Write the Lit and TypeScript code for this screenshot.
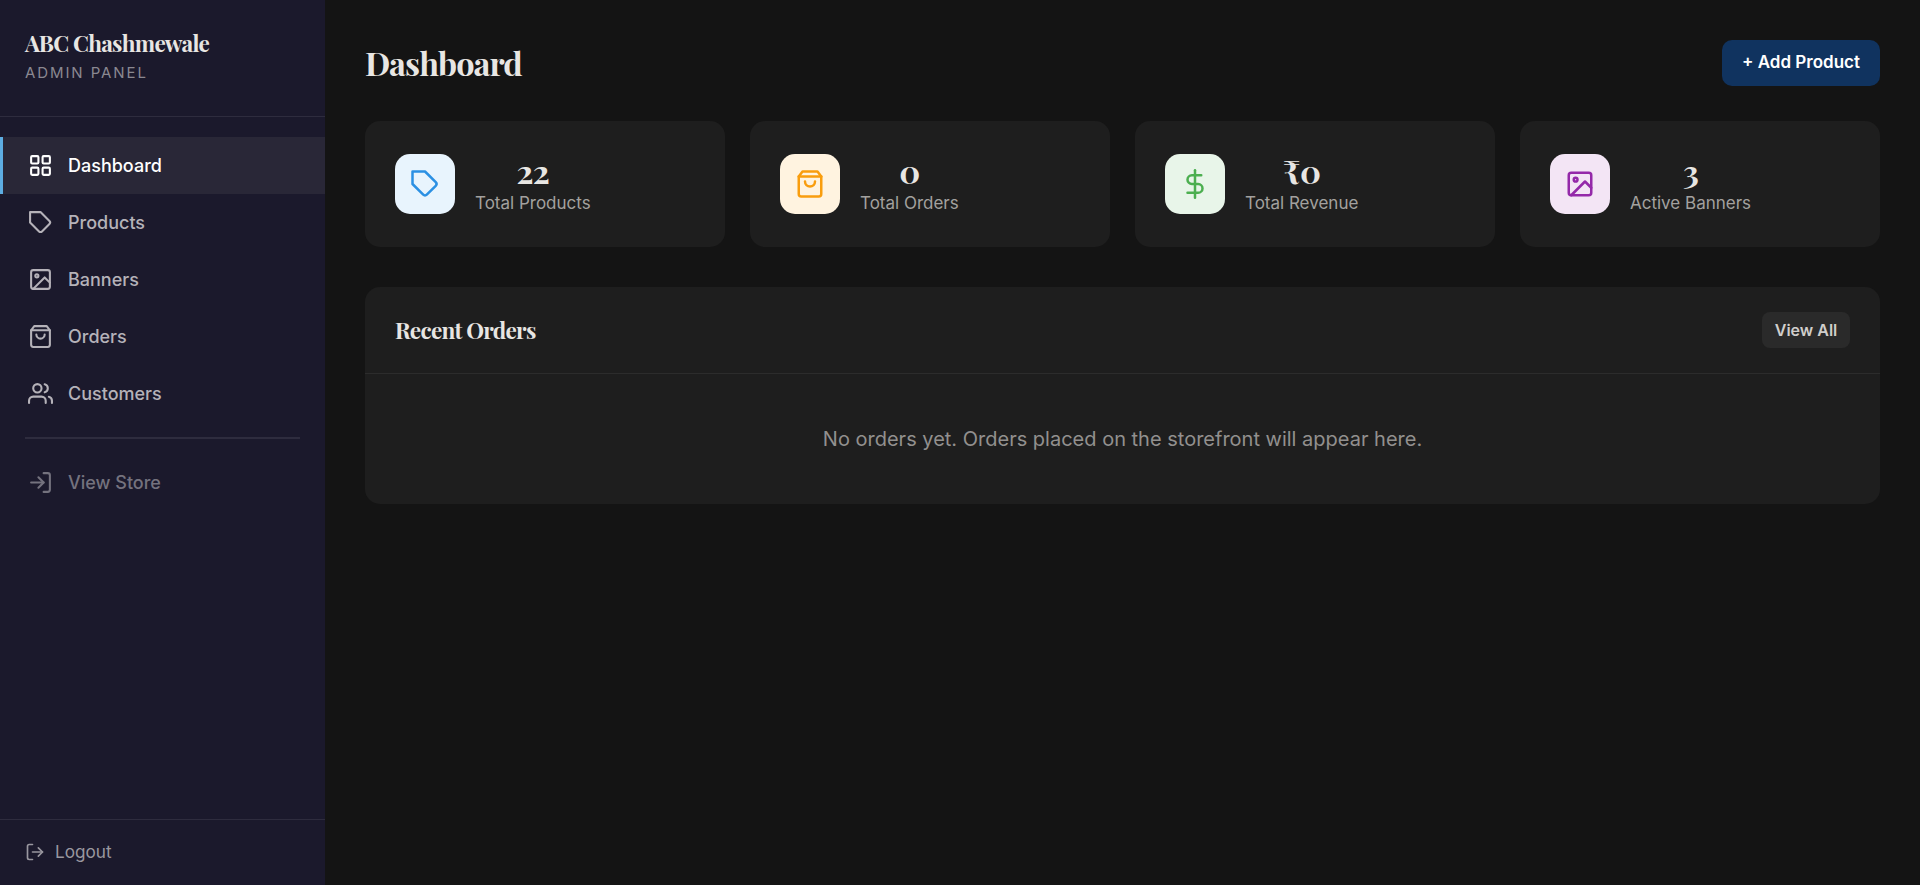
import { LitElement, html, svg, css, TemplateResult } from 'lit';
import { customElement, property } from 'lit/decorators.js';
import { classMap } from 'lit/directives/class-map.js';

const glyphs: Record<string, TemplateResult> = {
  grid: svg`<rect x="3" y="3" width="7" height="7" rx="1"/><rect x="14" y="3" width="7" height="7" rx="1"/><rect x="3" y="14" width="7" height="7" rx="1"/><rect x="14" y="14" width="7" height="7" rx="1"/>`,
  tag: svg`<path d="M20.59 13.41l-7.17 7.17a2 2 0 0 1-2.83 0L2 12V2h10l8.59 8.59a2 2 0 0 1 0 2.82z"/>`,
  image: svg`<rect x="3" y="3" width="18" height="18" rx="2"/><circle cx="8.5" cy="8.5" r="1.5"/><path d="M21 15l-5-5L5 21"/>`,
  bag: svg`<path d="M6 2L3 6v14a2 2 0 0 0 2 2h14a2 2 0 0 0 2-2V6l-3-4z"/><path d="M3 6h18"/><path d="M16 10a4 4 0 0 1-8 0"/>`,
  users: svg`<path d="M17 21v-2a4 4 0 0 0-4-4H5a4 4 0 0 0-4 4v2"/><circle cx="9" cy="7" r="4"/><path d="M23 21v-2a4 4 0 0 0-3-3.87"/><path d="M16 3.13a4 4 0 0 1 0 7.75"/>`,
  login: svg`<path d="M15 3h4a2 2 0 0 1 2 2v14a2 2 0 0 1-2 2h-4"/><path d="M10 17l5-5-5-5"/><path d="M15 12H3"/>`,
  logout: svg`<path d="M9 21H5a2 2 0 0 1-2-2V5a2 2 0 0 1 2-2h4"/><path d="M16 17l5-5-5-5"/><path d="M21 12H9"/>`,
  dollar: svg`<path d="M12 1v22"/><path d="M17 5H9.5a3.5 3.5 0 0 0 0 7h5a3.5 3.5 0 0 1 0 7H6"/>`,
};

@customElement('line-icon')
export class LineIcon extends LitElement {
  @property() name = 'grid';
  static styles = css`
    :host { display: block; flex: none; }
    .glyph {
      display: block; width: 100%; height: 100%; fill: none; stroke: currentColor;
      stroke-width: 2; stroke-linecap: round; stroke-linejoin: round;
    }
  `;
  render() {
    return html`<svg class="glyph" viewBox="0 0 24 24">${glyphs[this.name]}</svg>`;
  }
}

@customElement('admin-sidebar')
export class AdminSidebar extends LitElement {
  static styles = css`
    :host {
      display: flex; flex-direction: column; width: 325px; flex: none;
      box-sizing: border-box; background: #1b192c; color: #b5b2b9;
    }
    .brand {
      height: 117px; box-sizing: border-box; padding: 28px 25px 0;
      border-bottom: 1px solid #2e2c3e;
    }
    .name {
      font: 700 22.5px/30px "Playfair Display", "Liberation Serif", serif;
      letter-spacing: -0.7px; color: #e8e6e3; white-space: nowrap;
    }
    .sub { font-size: 15px; line-height: 24px; letter-spacing: 1.9px; color: #8a8891; padding-top: 3px; }
    .nav { flex: 1; padding-top: 20px; }
    .item {
      display: flex; align-items: center; gap: 15px; height: 57px; box-sizing: border-box;
      border-left: 3px solid transparent; padding: 0 25px;
      font-size: 18px; font-weight: 500;
    }
    .active { background: #292737; color: #fff; border-left-color: #5dade2; }
    .muted { color: #74727e; }
    .nav-icon { width: 25px; height: 25px; }
    .rule { height: 2px; margin: 15px 25px; background: #2e2c3e; }
    .foot {
      height: 66px; box-sizing: border-box; border-top: 1px solid #2e2c3e;
      padding: 0 25px 2px; display: flex; align-items: center; gap: 10px;
      font-size: 17.2px; color: #99979f;
    }
    .foot-icon { width: 20px; height: 20px; }
  `;
  private items = [
    ['grid', 'Dashboard'], ['tag', 'Products'], ['image', 'Banners'],
    ['bag', 'Orders'], ['users', 'Customers'],
  ];
  render() {
    return html`
      <div class="brand">
        <div class="name">ABC Chashmewale</div>
        <div class="sub">ADMIN PANEL</div>
      </div>
      <nav class="nav">
        ${this.items.map(([icon, label], i) => html`
          <div class=${classMap({ item: true, active: i === 0 })}>
            <line-icon class="nav-icon" name=${icon}></line-icon><span>${label}</span>
          </div>`)}
        <div class="rule"></div>
        <div class="item muted">
          <line-icon class="nav-icon" name="login"></line-icon><span>View Store</span>
        </div>
      </nav>
      <div class="foot"><line-icon class="foot-icon" name="logout"></line-icon><span>Logout</span></div>
    `;
  }
}

@customElement('stat-card')
export class StatCard extends LitElement {
  @property() icon = '';
  @property() tone = '';
  @property() value = '';
  @property() label = '';
  static styles = css`
    :host {
      display: flex; align-items: center; gap: 20px; height: 126px; box-sizing: border-box;
      padding: 0 30px; border-radius: 15px; background: #1e1e1e;
    }
    .tile {
      width: 60px; height: 60px; border-radius: 15px; flex: none;
      display: flex; align-items: center; justify-content: center;
    }
    .blue { background: #e8f4fd; color: #2b90e3; }
    .orange { background: #fff3e0; color: #f99d0e; }
    .green { background: #e8f5e9; color: #4caf50; }
    .purple { background: #f3e5f5; color: #9429a9; }
    .tile-icon { width: 30px; height: 30px; }
    .info { text-align: center; white-space: nowrap; }
    .value {
      font: 700 32.5px/34px "Playfair Display", "Liberation Serif", serif;
      letter-spacing: -0.6px; color: #e8e6e3; padding: 2px 0;
    }
    .label { font-size: 17px; line-height: 26px; color: #a3a19f; }
  `;
  render() {
    return html`
      <div class="tile ${this.tone}"><line-icon class="tile-icon" name=${this.icon}></line-icon></div>
      <div class="info">
        <div class="value">${this.value}</div>
        <div class="label">${this.label}</div>
      </div>
    `;
  }
}

@customElement('app-root')
export class AppRoot extends LitElement {
  static styles = css`
    :host {
      display: flex; height: 885px; overflow: hidden; background: #141414;
      font-family: Inter, "Liberation Sans", sans-serif;
    }
    .main { flex: 1; box-sizing: border-box; padding: 40px 40px 0; }
    .top { display: flex; justify-content: space-between; align-items: center; height: 46px; margin-bottom: 35px; }
    .title {
      margin: 0; font: 700 32.5px/46px "Playfair Display", "Liberation Serif", serif;
      letter-spacing: -0.9px; color: #e8e6e3;
    }
    .add {
      box-sizing: border-box; width: 158px; height: 46px; border-radius: 10px; background: #10335f;
      color: #fff; font-size: 17px; font-weight: 600; line-height: 45px; text-align: center; white-space: nowrap;
    }
    .stats { display: grid; grid-template-columns: repeat(4, 1fr); gap: 25px; margin-bottom: 40px; }
    .panel { background: #1e1e1e; border-radius: 15px; height: 217px; }
    .head {
      display: flex; align-items: center; justify-content: space-between; height: 87px;
      box-sizing: border-box; padding: 0 30px; border-bottom: 1px solid #2c2c2c;
    }
    .heading {
      margin: 0; font: 700 22.5px/30px "Playfair Display", "Liberation Serif", serif;
      letter-spacing: -0.7px; color: #e8e6e3;
    }
    .all {
      width: 88px; height: 36px; border-radius: 8px; background: #2a2a2a; color: #d0cecb;
      font-size: 16px; font-weight: 600; line-height: 36px; text-align: center; white-space: nowrap;
    }
    .empty { text-align: center; font-size: 20px; line-height: 130px; color: #92908e; }
  `;
  render() {
    return html`
      <admin-sidebar></admin-sidebar>
      <main class="main">
        <header class="top">
          <h1 class="title">Dashboard</h1>
          <div class="add">+ Add Product</div>
        </header>
        <section class="stats">
          <stat-card icon="tag" tone="blue" value="22" label="Total Products"></stat-card>
          <stat-card icon="bag" tone="orange" value="0" label="Total Orders"></stat-card>
          <stat-card icon="dollar" tone="green" value="₹0" label="Total Revenue"></stat-card>
          <stat-card icon="image" tone="purple" value="3" label="Active Banners"></stat-card>
        </section>
        <section class="panel">
          <div class="head">
            <h2 class="heading">Recent Orders</h2>
            <div class="all">View All</div>
          </div>
          <div class="empty">No orders yet. Orders placed on the storefront will appear here.</div>
        </section>
      </main>
    `;
  }
}
